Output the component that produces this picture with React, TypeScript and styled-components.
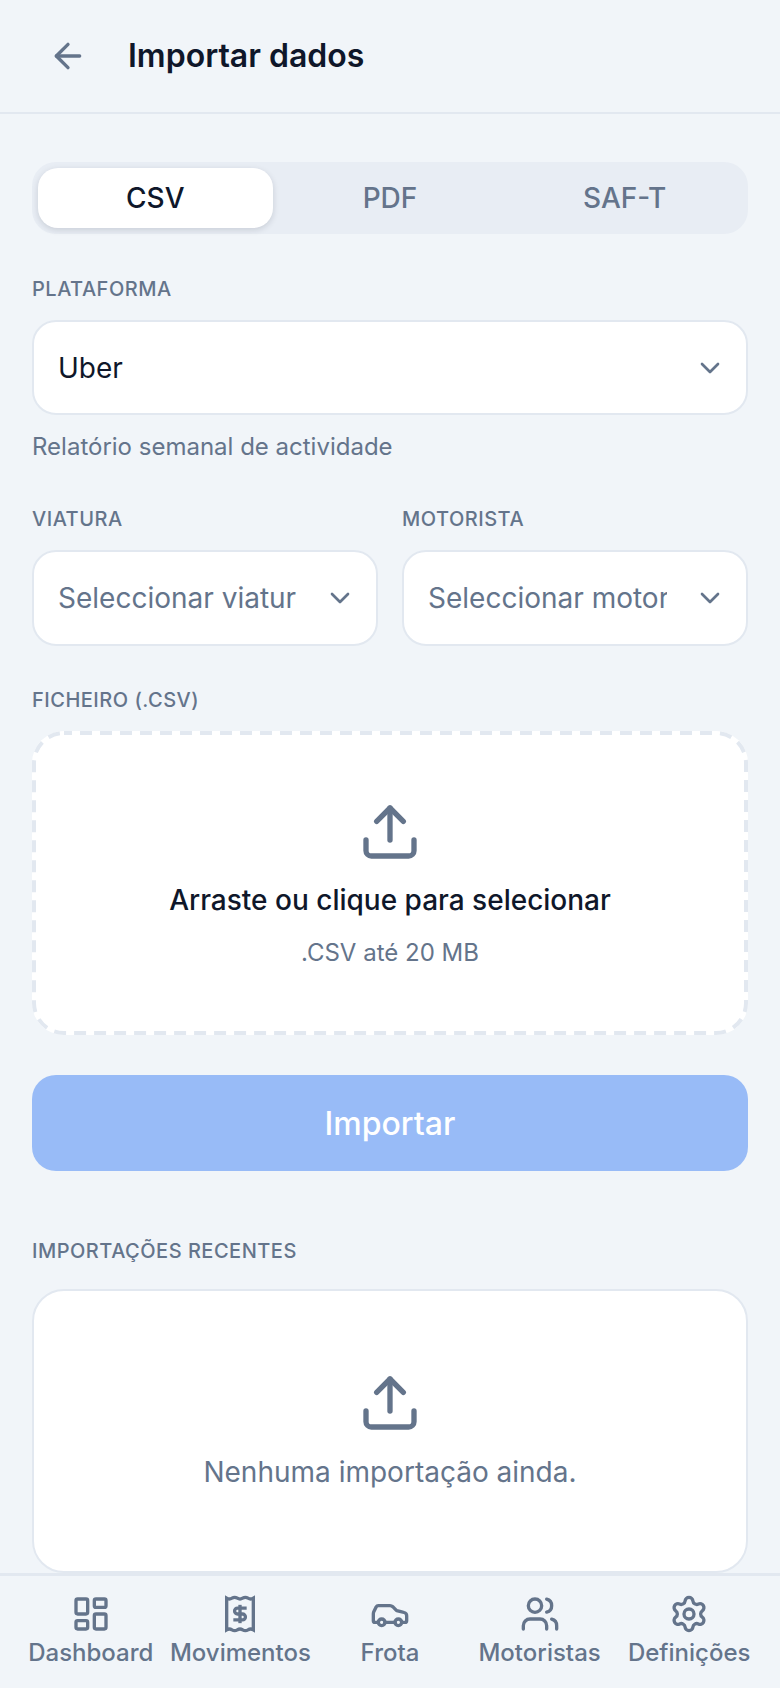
import React from "react";
import styled, { createGlobalStyle } from "styled-components";
import { ArrowLeft, ChevronDown, Upload, LayoutDashboard, Car, Users, Settings } from "lucide-react";

const Global = createGlobalStyle`
  html, body { margin: 0; padding: 0; background: #f1f5f9; }
  * { box-sizing: border-box; }
`;

const Page = styled.div`
  width: 780px; height: 1688px; display: flex; flex-direction: column; overflow: hidden;
  background: #f1f5f9; font-family: Inter, "Liberation Sans", sans-serif; color: #0f172a;
`;
const Header = styled.header`
  flex: none; height: 114px; display: flex; align-items: center; gap: 40px; padding: 0 48px;
  border-bottom: 2px solid #e2e8f0; color: #64748b;
`;
const Title = styled.h1`
  margin: 0; font-size: 32px; line-height: 40px; font-weight: 600; color: #0f172a;
`;
const Main = styled.main`
  flex: 1; min-height: 0; overflow: hidden; padding: 48px 32px 0; display: flex; flex-direction: column;
`;
const Tabs = styled.div`
  flex: none; height: 72px; padding: 6px; display: grid; grid-template-columns: repeat(3, 1fr);
  background: #e8edf4; border-radius: 24px;
`;
const Tab = styled.div<{ $active?: boolean }>`
  display: flex; align-items: center; justify-content: center; border-radius: 20px;
  font-size: 28px; font-weight: 500;
  color: ${p => (p.$active ? "#0f172a" : "#64748b")};
  background: ${p => (p.$active ? "#fff" : "transparent")};
  box-shadow: ${p => (p.$active ? "0 2px 6px rgba(15,23,42,.14)" : "none")};
`;
const Label = styled.div<{ $top: number; $bottom?: number }>`
  margin: ${p => p.$top}px 0 ${p => p.$bottom ?? 19}px; font-size: 20px; line-height: 24px; font-weight: 500;
  letter-spacing: 0.5px; color: #64748b; text-transform: uppercase;
`;
const Select = styled.div<{ $placeholder?: boolean }>`
  height: 96px; padding: 0 20px 0 24px; display: flex; align-items: center; gap: 27px;
  background: #fff; border: 2px solid #e2e8f0; border-radius: 24px;
  font-size: 28px; color: ${p => (p.$placeholder ? "#64748b" : "#0f172a")};
  svg { flex: none; color: #64748b; }
`;
const SelectText = styled.span`
  flex: 1; min-width: 0; overflow: hidden; white-space: nowrap;
`;
const Hint = styled.div`
  margin-top: 16px; font-size: 24px; line-height: 32px; color: #64748b;
`;
const Row = styled.div`
  display: grid; grid-template-columns: repeat(2, minmax(0, 1fr)); gap: 24px;
`;
const Drop = styled.div`
  position: relative; flex: none; height: 304px; padding-top: 69px; display: flex; flex-direction: column; align-items: center;
  background: #fff; border-radius: 32px; color: #64748b;
`;
const DashedFrame = styled.svg`
  position: absolute; top: 0; left: 0; pointer-events: none;
`;
const DropTitle = styled.div`
  margin-top: 18px; font-size: 28px; line-height: 36px; font-weight: 500; color: #0f172a;
`;
const DropSub = styled.div`
  margin-top: 19px; font-size: 24px; line-height: 32px; color: #64748b;
`;
const ImportButton = styled.div`
  flex: none; margin-top: 40px; height: 96px; display: flex; align-items: center; justify-content: center;
  background: #98bbf7; border-radius: 24px; color: #fff; font-size: 32px; font-weight: 500;
`;
const Card = styled.div`
  flex: none; height: 284px; display: flex; flex-direction: column; align-items: center; padding-top: 80px;
  background: #fff; border: 2px solid #e2e8f0; border-radius: 32px; color: #64748b;
`;
const Empty = styled.div`
  margin-top: 17px; font-size: 28px; line-height: 40px; color: #64748b;
`;
const Nav = styled.nav`
  flex: none; height: 115px; display: grid; grid-template-columns: repeat(5, 1fr); padding: 0 16px;
  border-top: 3px solid #e2e8f0; background: #f1f5f9;
`;
const NavItem = styled.div`
  display: flex; flex-direction: column; align-items: center; gap: 3px; padding-top: 18px;
  font-size: 24px; line-height: 32px; font-weight: 500; color: #64748b; white-space: nowrap;
`;

const Receipt = () => (
  <svg width="40" height="40" viewBox="0 0 24 24" fill="none" stroke="currentColor" strokeWidth="2" strokeLinecap="butt" strokeLinejoin="miter">
    <path d="M4 2.5q1.6 1 3.2 0t3.2 0 3.2 0 3.2 0 3.2 0v19q-1.6-1-3.2 0t-3.2 0-3.2 0-3.2 0-3.2 0Z" />
    <path d="M16 8.5h-5.5a1.75 1.75 0 0 0 0 3.5h3a1.75 1.75 0 0 1 0 3.5H8" />
    <path d="M12 6.5v11" />
  </svg>
);

const nav = [
  { label: "Dashboard", icon: <LayoutDashboard size={40} /> },
  { label: "Movimentos", icon: <Receipt /> },
  { label: "Frota", icon: <Car size={40} /> },
  { label: "Motoristas", icon: <Users size={40} /> },
  { label: "Definições", icon: <Settings size={40} /> },
];

export default function App() {
  return (
    <Page>
      <Global />
      <Header>
        <ArrowLeft size={40} />
        <Title>Importar dados</Title>
      </Header>
      <Main>
        <Tabs>
          <Tab $active>CSV</Tab>
          <Tab>PDF</Tab>
          <Tab>SAF-T</Tab>
        </Tabs>
        <Label $top={43}>Plataforma</Label>
        <Select>
          <SelectText>Uber</SelectText>
          <ChevronDown size={32} />
        </Select>
        <Hint>Relatório semanal de actividade</Hint>
        <Row>
          <div>
            <Label $top={44}>Viatura</Label>
            <Select $placeholder>
              <SelectText>Seleccionar viatura</SelectText>
              <ChevronDown size={32} />
            </Select>
          </div>
          <div>
            <Label $top={44}>Motorista</Label>
            <Select $placeholder>
              <SelectText>Seleccionar motorista</SelectText>
              <ChevronDown size={32} />
            </Select>
          </div>
        </Row>
        <Label $top={42}>Ficheiro (.csv)</Label>
        <Drop>
          <DashedFrame width="716" height="304" viewBox="0 0 716 304" fill="none">
            <rect x="2" y="2" width="712" height="300" rx="30" stroke="#e2e8f0" strokeWidth="4" strokeDasharray="12 8" strokeDashoffset="4" />
          </DashedFrame>
          <Upload size={64} strokeWidth={2} />
          <DropTitle>Arraste ou clique para selecionar</DropTitle>
          <DropSub>.CSV até 20 MB</DropSub>
        </Drop>
        <ImportButton>Importar</ImportButton>
        <Label $top={68} $bottom={26}>Importações recentes</Label>
        <Card>
          <Upload size={64} strokeWidth={2} />
          <Empty>Nenhuma importação ainda.</Empty>
        </Card>
      </Main>
      <Nav>
        {nav.map(n => (
          <NavItem key={n.label}>
            {n.icon}
            {n.label}
          </NavItem>
        ))}
      </Nav>
    </Page>
  );
}
